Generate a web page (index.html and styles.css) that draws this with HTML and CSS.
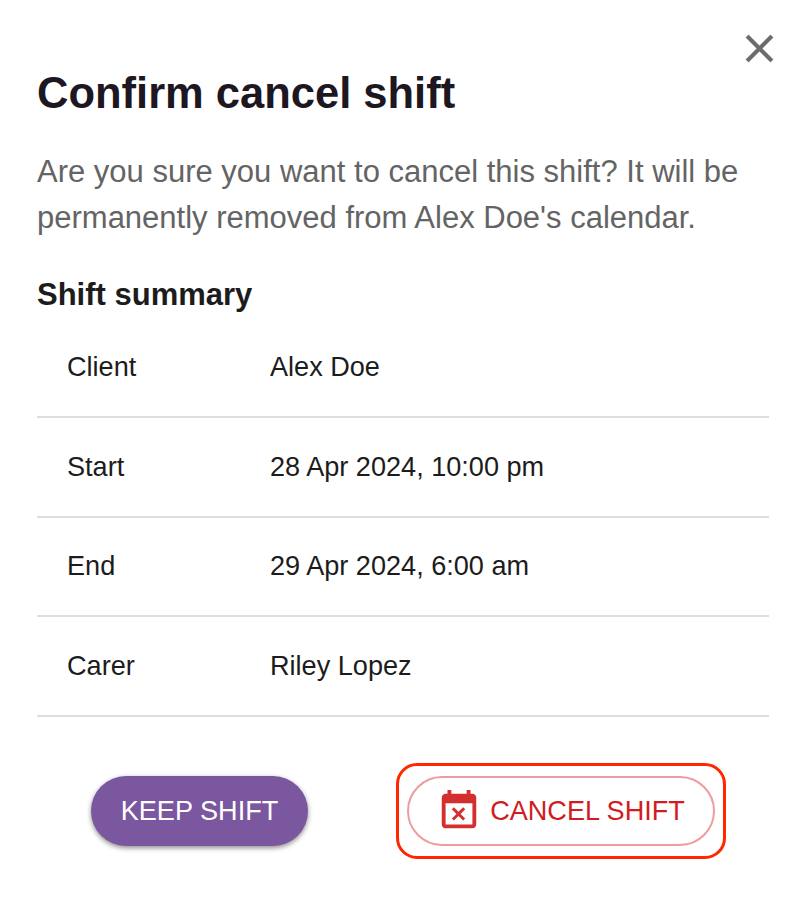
FILE: index.html
```html
<!DOCTYPE html>
<html lang="en">
<head>
<meta charset="utf-8">
<title>Confirm cancel shift</title>
<link rel="stylesheet" href="styles.css">
</head>
<body>
<main class="dialog">
  <button class="close" aria-label="Close"><svg viewBox="0 0 24 24"><path d="M19 6.41 17.59 5 12 10.59 6.41 5 5 6.41 10.59 12 5 17.59 6.41 19 12 13.41 17.59 19 19 17.59 13.41 12z"/></svg></button>
  <h1>Confirm cancel shift</h1>
  <p class="message">Are you sure you want to cancel this shift? It will be<br>permanently removed from Alex Doe's calendar.</p>
  <h2>Shift summary</h2>
  <dl class="summary">
    <div class="row"><dt>Client</dt><dd>Alex Doe</dd></div>
    <div class="row"><dt>Start</dt><dd>28 Apr 2024, 10:00 pm</dd></div>
    <div class="row"><dt>End</dt><dd>29 Apr 2024, 6:00 am</dd></div>
    <div class="row"><dt>Carer</dt><dd>Riley Lopez</dd></div>
  </dl>
  <div class="actions">
    <button class="btn keep"><span>KEEP SHIFT</span></button>
    <div class="highlight">
      <button class="btn cancel"><svg viewBox="0 0 24 24"><path d="M9.31 17l2.44-2.44L14.19 17l1.06-1.06-2.44-2.44 2.44-2.44L14.19 10l-2.44 2.44L9.31 10l-1.06 1.06 2.44 2.44-2.44 2.44L9.31 17zM19 3h-1V1h-2v2H8V1H6v2H5c-1.11 0-1.99.9-1.99 2L3 19c0 1.1.89 2 2 2h14c1.1 0 2-.9 2-2V5c0-1.1-.9-2-2-2zm0 16H5V8h14v11z"/></svg><span>CANCEL SHIFT</span></button>
    </div>
  </div>
</main>
</body>
</html>
```
FILE: styles.css
```css
* { box-sizing: border-box; }
body {
  margin: 0;
  background: #fff;
  color: #1c1c1c;
  font-family: "Liberation Sans", Arial, sans-serif;
}
.dialog {
  display: flex;
  flex-direction: column;
  width: 800px;
  height: 898px;
  padding: 25px 31px 0 37px;
}
h1, h2, p, dl, dd { margin: 0; }
button { padding: 0; border: 0; background: none; font: inherit; }
.close { align-self: flex-end; width: 46px; height: 46px; margin-right: -13px; }
.close svg { display: block; width: 47px; height: 47px; fill: #6c6c6c; stroke: #6c6c6c; stroke-width: 0.15; }
h1 { color: #1d1722; font-size: 43.5px; line-height: 50px; margin-top: -3px; white-space: nowrap; }
.message { margin-top: 31px; color: #646464; font-size: 31px; line-height: 46px; white-space: nowrap; }
h2 { margin-top: 36px; font-size: 31px; line-height: 36px; }
.summary { margin-top: 5px; }
.row {
  display: grid;
  grid-template-columns: 203px 1fr;
  align-items: center;
  height: 99.8px;
  padding-left: 30px;
  border-bottom: 2px solid #dedede;
  font-size: 27.1px;
  line-height: 32px;
}
.actions { display: flex; align-items: center; margin-top: 46px; padding-left: 54px; }
.btn { display: flex; align-items: center; justify-content: center; height: 70px; border-radius: 35px; font-size: 27.1px; white-space: nowrap; }
.keep { width: 217px; background: #7a579e; color: #fff; box-shadow: 0 2px 5px rgba(0,0,0,.45); }
.highlight { width: 330px; height: 96px; margin-left: 88px; padding: 10px 8px; border: 3px solid #ff2600; border-radius: 21px; }
.cancel { width: 308px; border: 2px solid #ee9c9c; color: #d01c22; }
.cancel svg { width: 46px; height: 46px; margin-left: -1px; margin-right: 8px; fill: #d32f2f; }
```
